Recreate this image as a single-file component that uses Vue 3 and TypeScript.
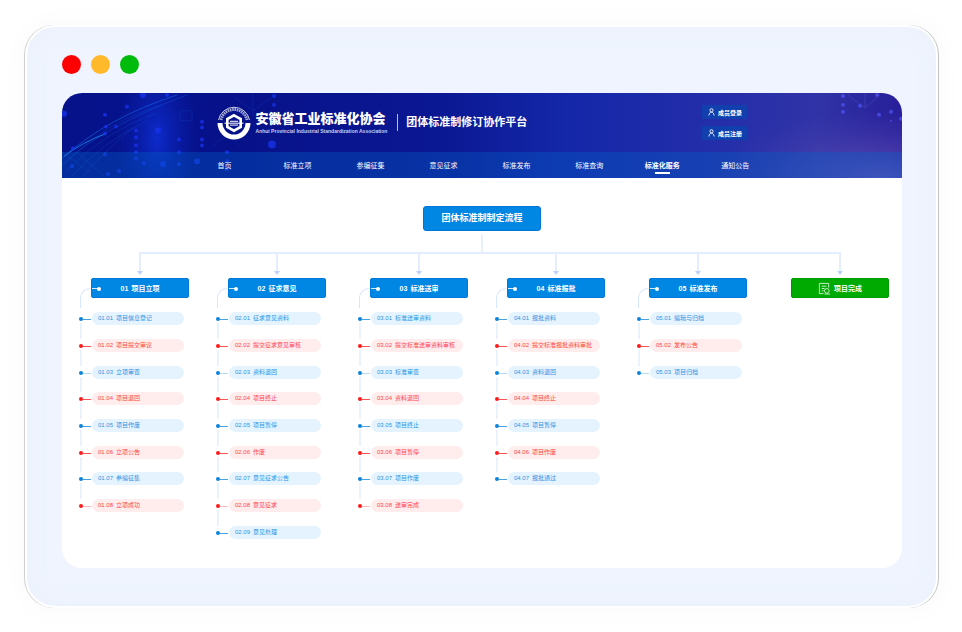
<script setup lang="ts">
interface Stage {
  no: string
  title: string
  steps: string[]
}

const navItems: string[] = ['首页', '标准立项', '参编征集', '意见征求', '标准发布', '标准查询', '标准化服务', '通知公告']
const activeNav = '标准化服务'
const accountLinks: string[] = ['成员登录', '成员注册']

const stages: Stage[] = [
  {
    no: '01',
    title: '项目立项',
    steps: ['项目信息登记', '项目提交审议', '立项审查', '项目退回', '项目作废', '立项公告', '参编征集', '立项成功'],
  },
  {
    no: '02',
    title: '征求意见',
    steps: ['征求意见资料', '提交征求意见审核', '资料退回', '项目终止', '项目暂停', '作废', '意见征求公告', '意见征求', '意见处理'],
  },
  {
    no: '03',
    title: '标准送审',
    steps: ['标准送审资料', '提交标准送审资料审核', '标准审查', '资料退回', '项目终止', '项目暂停', '项目作废', '送审完成'],
  },
  {
    no: '04',
    title: '标准报批',
    steps: ['报批资料', '提交标准报批资料审批', '资料退回', '项目终止', '项目暂停', '项目作废', '报批通过'],
  },
  {
    no: '05',
    title: '标准发布',
    steps: ['编辑与归档', '发布公告', '项目归档'],
  },
]

const stepNo = (stage: Stage, index: number): string => `${stage.no}.${String(index + 1).padStart(2, '0')}`
</script>

<template>
  <div class="page">
    <div class="frame">
      <div class="lights">
        <span class="light red"></span>
        <span class="light amber"></span>
        <span class="light green"></span>
      </div>

      <div class="site">
        <header class="banner">
          <svg class="backdrop" viewBox="0 0 840 86" preserveAspectRatio="none" aria-hidden="true">
            <defs>
              <linearGradient id="base" x1="0" y1="0" x2="1" y2="0">
                <stop offset="0" stop-color="#06138a" />
                <stop offset="0.22" stop-color="#07128a" />
                <stop offset="0.45" stop-color="#0b1893" />
                <stop offset="0.6" stop-color="#1427a8" />
                <stop offset="0.78" stop-color="#242eaa" />
                <stop offset="0.9" stop-color="#3033a6" />
                <stop offset="1" stop-color="#28209a" />
              </linearGradient>
              <radialGradient id="beam">
                <stop offset="0" stop-color="#1034e0" stop-opacity="0.75" />
                <stop offset="1" stop-color="#0a22b8" stop-opacity="0" />
              </radialGradient>
              <radialGradient id="dusk">
                <stop offset="0" stop-color="#8468c8" stop-opacity="0.6" />
                <stop offset="1" stop-color="#5040b0" stop-opacity="0" />
              </radialGradient>
            </defs>
            <rect width="840" height="86" fill="url(#base)" />
            <ellipse cx="95" cy="45" rx="42" ry="90" fill="url(#beam)" />
            <ellipse cx="820" cy="86" rx="170" ry="70" fill="url(#dusk)" />
            <g fill="none" stroke="#1462e0">
              <path d="M0 66Q45 25 115 2" stroke-opacity="0.65" />
              <path d="M0 72Q45 32 125 2" stroke-opacity="0.35" />
              <path d="M2 64Q20 50 44 41" stroke="#1b90f4" stroke-opacity="0.8" />
              <path d="M0 75Q40 30 100 12M4 80Q40 40 95 20M10 84Q40 50 85 28M20 86Q42 58 72 35" stroke-opacity="0.25" />
              <path d="M0 60L28 80M8 54L42 84" stroke-opacity="0.25" />
              <path d="M172 4L191 18L210 4M191 0V24M150 54L166 42L178 54M118 18h12v10h-12z" stroke-opacity="0.2" />
            </g>
            <g fill="#1833ee" opacity="0.75">
              <circle cx="2" cy="21" r="3" /><circle cx="43" cy="22" r="2" /><circle cx="65" cy="14" r="2" />
              <circle cx="81" cy="2" r="3" /><circle cx="105" cy="2" r="2" />
              <circle cx="43" cy="41" r="2" /><circle cx="44" cy="34" r="2" /><circle cx="54" cy="34" r="2" />
              <circle cx="43" cy="62" r="2" /><circle cx="11" cy="56" r="2" /><circle cx="74" cy="38" r="2" />
              <circle cx="74" cy="45" r="2" /><circle cx="74" cy="53" r="2" /><circle cx="74" cy="60" r="2" />
              <circle cx="74" cy="66" r="2" /><circle cx="96" cy="38" r="3" /><circle cx="101" cy="72" r="3" />
              <circle cx="82" cy="71" r="2" /><circle cx="117" cy="47" r="2" /><circle cx="117" cy="60" r="2" />
              <circle cx="117" cy="72" r="2" /><circle cx="135" cy="69" r="3" /><circle cx="140" cy="29" r="2" />
              <circle cx="140" cy="35" r="2" /><circle cx="140" cy="47" r="2" /><circle cx="140" cy="53" r="2" />
              <circle cx="165" cy="60" r="2" /><circle cx="165" cy="69" r="2" /><circle cx="165" cy="77" r="2" />
              <circle cx="212" cy="3" r="2" /><circle cx="212" cy="12" r="2" /><circle cx="210" cy="52" r="4" />
              <circle cx="57" cy="79" r="2" /><circle cx="46" cy="82" r="2" /><circle cx="10" cy="74" r="2" />
            </g>
            <g fill="#4d50ee" stroke="#5554d0" opacity="0.8">
              <path d="M786 2L803 15L818 2M803 0V15" fill="none" stroke-opacity="0.5" />
              <g stroke="none">
                <circle cx="781" cy="3" r="2" /><circle cx="781" cy="12" r="2" /><circle cx="781" cy="19" r="2" />
                <circle cx="798" cy="13" r="2" /><circle cx="815" cy="2" r="2" /><circle cx="817" cy="22" r="2" />
                <circle cx="829" cy="19" r="2" /><circle cx="829" cy="28" r="1" /><circle cx="839" cy="26" r="2" />
              </g>
            </g>
          </svg>

          <div class="brand-row">
            <div class="brand">
              <svg class="emblem" viewBox="0 0 34 34" aria-hidden="true">
                <path d="M1.500 14A15.800 15.800 0 0 1 32.500 14" fill="none" stroke="#fff" stroke-width="0.800" />
                <path d="M4 14A13.300 13.300 0 0 1 30 14" fill="none" stroke="#fff" stroke-width="2.800" stroke-dasharray="1.600 0.700" opacity="0.65" />
                <path d="M.5 17A16.500 16.500 0 0 0 33.500 17H28.500A11.500 11.500 0 0 1 5.500 17Z" fill="#fff" />
                <path d="M17 9.300L23.700 13V21L17 24.700L10.300 21V13Z" fill="none" stroke="#fff" stroke-width="2.600" />
                <path d="M13 15.300H21M7.500 17.200H26.500M13 19.100H21" stroke="#fff" stroke-width="1" />
              </svg>
              <div class="association">
                <strong class="association-cn">安徽省工业标准化协会</strong>
                <span class="association-en">Anhui Provincial Industrial Standardization Association</span>
              </div>
              <h1 class="platform">团体标准制修订协作平台</h1>
            </div>
            <div class="account">
              <a v-for="link in accountLinks" :key="link" class="account-link" href="#">
                <svg class="person" viewBox="0 0 8 9" aria-hidden="true">
                  <circle cx="4" cy="2.500" r="1.800" />
                  <path d="M1 8.500C1.200 6 2.500 4.800 4 4.800S6.800 6 7 8.500" />
                </svg>
                {{ link }}
              </a>
            </div>
          </div>

          <nav class="nav">
            <a v-for="item in navItems" :key="item" href="#" class="nav-link" :class="{ active: item === activeNav }">
              {{ item }}
            </a>
          </nav>
        </header>

        <main class="flow">
          <h2 class="flow-title">团体标准制制定流程</h2>
          <div class="stem"></div>
          <div class="stages">
            <section v-for="stage in stages" :key="stage.no" class="stage">
              <div class="branch"></div>
              <div class="head-row">
                <span class="elbow"></span>
                <h3 class="head"><span>{{ stage.no }}</span><span>{{ stage.title }}</span></h3>
              </div>
              <ol class="steps">
                <li v-for="(step, i) in stage.steps" :key="i" class="step" :class="i % 2 ? 'warm' : 'cool'">
                  <span class="dot"></span>
                  <span class="stub"></span>
                  <span class="pill"><span>{{ stepNo(stage, i) }}</span><span>{{ step }}</span></span>
                </li>
              </ol>
            </section>
            <section class="stage">
              <div class="branch end"></div>
              <div class="head-row">
                <h3 class="head done">
                  <svg class="doc" viewBox="0 0 14 14" aria-hidden="true">
                    <path d="M11.500 6V1.500H1.500V12.500H6M4 4.500H9M4 7H7M4 9.500H6" />
                    <circle cx="9.500" cy="9.500" r="2.500" />
                    <path d="M7 13H13" />
                  </svg>
                  <span>项目完成</span>
                </h3>
              </div>
            </section>
          </div>
        </main>
      </div>
    </div>
  </div>
</template>

<style>
body {
  margin: 0;
  background: #fff;
}
</style>

<style scoped>
* {
  box-sizing: border-box;
}

.page {
  display: flex;
  min-height: 100vh;
  padding: 25px 23px 24px 24px;
  font-family: "Liberation Sans", "Noto Sans CJK SC", sans-serif;
}

.frame {
  flex: 1;
  display: flex;
  flex-direction: column;
  gap: 19px;
  padding: 28px 34px 38px 35px;
  border: 2px solid #fff;
  border-radius: 30px;
  background: #eff4fe;
  box-shadow: inset 0 0 24px #ebf1fc, -1px 0 0 #d0d0d0, 1px 0 0 #c4c4c4, 0 0 24px 4px #fafafa;
  margin: 0 1px;
}

.lights {
  display: flex;
  gap: 10px;
}

.light {
  width: 19px;
  height: 19px;
  border-radius: 50%;
}

.red { background: #f00; }
.amber { background: #ffb92a; }
.green { background: #00ba0c; }

.site {
  flex: 1;
  border-radius: 20px;
  background: #fff;
  overflow: hidden;
}

a {
  color: #fff;
  text-decoration: none;
}

h1, h2, h3, ol {
  margin: 0;
  padding: 0;
}

.banner {
  position: relative;
  color: #fff;
}

.backdrop {
  position: absolute;
  inset: 0;
  width: 100%;
  height: 100%;
}

.brand-row {
  position: relative;
  display: flex;
  align-items: center;
  justify-content: space-between;
  height: 59px;
  padding: 0 18.4%;
}

.brand {
  display: flex;
  align-items: center;
  white-space: nowrap;
}

.emblem {
  width: 34px;
  height: 34px;
  margin-right: 5px;
}

.association {
  display: flex;
  flex-direction: column;
  gap: 2px;
}

.association-cn {
  font-size: 13px;
  line-height: 14px;
  font-weight: 900;
}

.association-en {
  font-size: 5px;
  line-height: 6px;
  font-weight: 700;
  color: #c9cff2;
}

.platform {
  margin-left: 10px;
  padding-left: 8px;
  border-left: 1px solid #b7bfec;
  font-size: 11px;
  line-height: 17px;
  font-weight: 700;
}

.account {
  display: flex;
  flex-direction: column;
  gap: 7px;
}

.account-link {
  display: flex;
  align-items: center;
  justify-content: center;
  gap: 3px;
  width: 45px;
  height: 14px;
  border-radius: 1px;
  background: #123fae;
  font-size: 6px;
  font-weight: 700;
  white-space: nowrap;
}

.person {
  width: 7px;
  height: 8px;
  fill: none;
  stroke: #fff;
  stroke-width: 1;
}

.nav {
  position: relative;
  display: grid;
  grid-template-columns: repeat(8, 1fr);
  height: 26px;
  padding: 0 15.5% 0 15%;
  background: rgba(4, 98, 196, 0.36);
}

.nav-link {
  display: flex;
  flex-direction: column;
  align-items: center;
  gap: 1px;
  padding-top: 8px;
  font-size: 7px;
  line-height: 11px;
  white-space: nowrap;
}

.nav-link.active {
  font-weight: 700;
}

.nav-link.active::after {
  content: "";
  width: 15px;
  height: 2px;
  background: #fff;
}

.flow {
  display: flex;
  flex-direction: column;
  align-items: center;
  padding: 28px 0 16px;
}

.flow-title {
  padding: 0 17px;
  border: 1px solid #0077d6;
  border-radius: 3px;
  background: #0086e3;
  color: #fff;
  font-size: 9px;
  line-height: 23px;
  font-weight: 700;
}

.stem {
  width: 2px;
  height: 17px;
  margin-top: 4px;
  background: #e8effe;
}

.stages {
  align-self: stretch;
  display: grid;
  grid-template-columns: 137fr 142fr 137fr 142fr 142fr 110fr;
  padding: 0 13px 0 17px;
}

.stage {
  min-width: 0;
}

.branch {
  position: relative;
  width: 100%;
  height: 20px;
  margin: 0 0 6px 60px;
  border-top: 2px solid #e4edff;
  border-left: 2px solid #e4edff;
}

.branch.end {
  width: 2px;
}

.branch::after {
  content: "";
  position: absolute;
  left: -4px;
  bottom: -3px;
  border: 3px solid transparent;
  border-top: 4px solid #bdd2fb;
  border-bottom: 0;
}

.head-row {
  display: flex;
  justify-content: flex-start;
  height: 34px;
}

.elbow {
  width: 10px;
  height: 20px;
  margin: 10px -11px 0 1px;
  border: 1px solid #d8e6fd;
  border-right: 0;
  border-bottom: 0;
  border-top-left-radius: 10px;
}

.head {
  position: relative;
  display: flex;
  align-items: center;
  justify-content: center;
  gap: 3px;
  width: 98px;
  height: 20px;
  margin-left: 12px;
  border: 1px solid #0079d8;
  border-radius: 2px;
  background: #0086e3;
  color: #fff;
  font-size: 7px;
  font-weight: 700;
  white-space: nowrap;
}

.head::before {
  content: "";
  position: absolute;
  left: 0;
  top: 9px;
  width: 7px;
  height: 1px;
  background: #d5ebfb;
}

.head::after {
  content: "";
  position: absolute;
  left: 5px;
  top: 8px;
  width: 4px;
  height: 4px;
  border-radius: 50%;
  background: #fff;
}

.head.done {
  border-color: #009b00;
  background: #00aa00;
}

.head.done::before,
.head.done::after {
  display: none;
}

.doc {
  width: 13px;
  height: 13px;
  fill: none;
  stroke: #d4f2d4;
  stroke-width: 1;
}

.steps {
  list-style: none;
}

.step {
  display: flex;
  align-items: flex-start;
  height: 27px;
  background: linear-gradient(#eaf2fe, #eaf2fe) 1px 11px / 2px 16px no-repeat;
}

.step:nth-child(3n) {
  height: 26px;
}

.step:last-child {
  background: none;
}

.cool {
  --tone: #0a83dc;
  --text: #2b93e3;
  --fill: #e5f3ff;
}

.warm {
  --tone: #ff1a1a;
  --text: #ff4545;
  --fill: #ffeded;
}

.dot {
  width: 4px;
  height: 4px;
  margin-top: 5px;
  border-radius: 50%;
  background: var(--tone);
}

.stub {
  width: 8px;
  height: 1px;
  margin: 7px 1px 0 0;
  background: var(--tone);
  opacity: 0.75;
}

.step:nth-child(5n + 3) .stub {
  opacity: 0.3;
}

.pill {
  display: flex;
  gap: 3px;
  width: 92px;
  padding-left: 6px;
  border-radius: 7px;
  background: var(--fill);
  color: var(--text);
  font-size: 6px;
  line-height: 13px;
  white-space: nowrap;
}
</style>
